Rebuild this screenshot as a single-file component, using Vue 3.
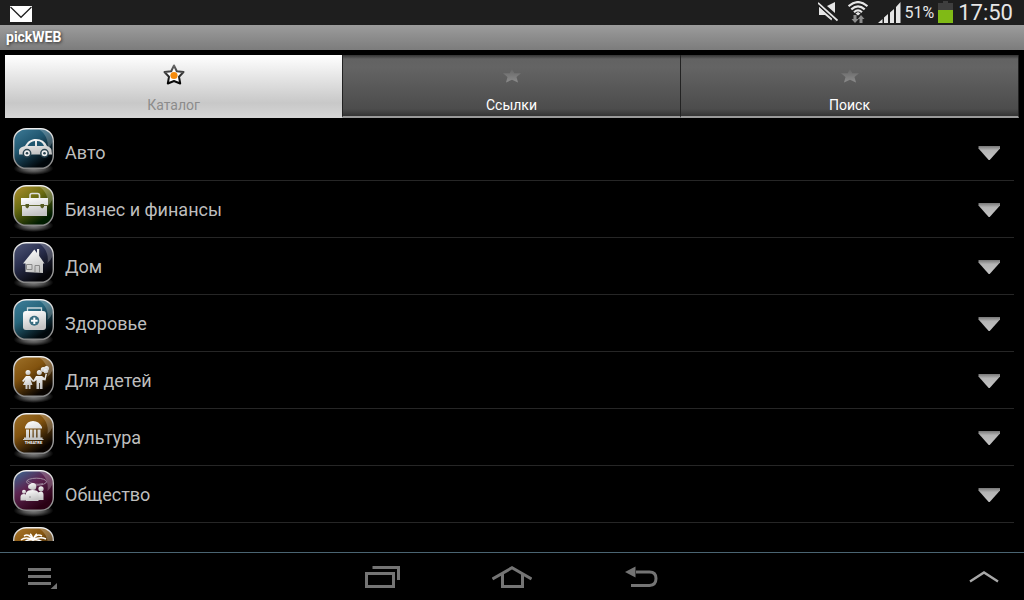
<template>
  <div class="screen">
    <header class="status-bar">
      <svg class="mail" width="22" height="16" viewBox="0 0 22 16">
        <rect width="22" height="16" fill="#fff" />
        <path d="M0.5 1 11 11.3 21.5 1" fill="none" stroke="#1e1e1e" stroke-width="1.2" />
      </svg>
      <div class="status-right">
        <svg class="mute" width="20" height="20" viewBox="0 0 20 20">
          <path d="M1 5 13.500 17V18.500L7 13H1ZM9 4 17 0V11Z" fill="#e6e6e6" />
          <path d="M0 0.8 19.5 18.5" stroke="#1e1e1e" stroke-width="4.5" />
          <path d="M0 0.8 19.5 18.5" stroke="#e6e6e6" stroke-width="1.7" />
          <path d="M1 5V13H8L14 18V16.500L9.500 12.500Z" fill="#e6e6e6" />
        </svg>
        <svg class="wifi" width="20" height="22" viewBox="0 0 20 22">
          <g fill="none" stroke="#e6e6e6" stroke-width="2.200">
            <path d="M0.500 5.200Q10-3 19.500 5.200" />
            <path d="M3.300 8.400Q10 2.500 16.700 8.400" />
            <path d="M6 11.200Q10 7.600 14 11.200" />
          </g>
          <path d="M7.500 12.500 10 11l2.500 1.500L10 14.500Z" fill="#e6e6e6" />
          <path d="M5.500 14h3v4H10.700L7 22 3.500 18h2ZM11.500 22h3v-4h2L13 14 9.800 18H11.500Z" fill="#8c8c8c" />
        </svg>
        <svg class="signal" width="23" height="21" viewBox="0 0 23 21">
          <path d="M0 21 4.500 17v4ZM6 21v-5.500L10 12v9ZM12 21V10.500L16 7v14ZM18 21V5L22.500 0v21Z" fill="#e6e6e6" />
        </svg>
        <span class="percent">51%</span>
        <svg class="battery" width="15" height="22" viewBox="0 0 15 22">
          <path d="M5 0h5v2h5v7H0V2h5Z" fill="#3e3e3e" />
          <rect y="9" width="15" height="13" fill="#80ba16" />
        </svg>
        <time class="clock">17:50</time>
      </div>
    </header>

    <h1 class="title">pickWEB</h1>

    <div class="tabs" role="tablist">
      <button
        v-for="tab in tabs"
        :key="tab"
        type="button"
        role="tab"
        class="tab"
        :class="{ active: tab === activeTab }"
        :aria-selected="tab === activeTab"
        @click="activeTab = tab"
      >
        <svg v-if="tab === activeTab" width="24" height="24" viewBox="0 0 24 24">
          <defs>
            <linearGradient id="starLine" x2="0" y2="1">
              <stop offset="0" stop-color="#666" />
              <stop offset="1" stop-color="#000" />
            </linearGradient>
          </defs>
          <path d="M12 2.500 14.800 8.300 21.500 9 17 13.800 18.200 20.500 12 18 5.800 20.500 7 13.800 2.500 9 9.200 8.300Z" fill="#fff" stroke="url(#starLine)" stroke-width="2" stroke-linejoin="round" />
          <circle cx="12" cy="12.500" r="3.600" fill="#f58a0b" />
        </svg>
        <svg v-else width="24" height="24" viewBox="0 0 24 24">
          <defs>
            <linearGradient id="starFill" x2="0" y2="1">
              <stop offset="0" stop-color="#666" />
              <stop offset="1" stop-color="#8c8c8c" />
            </linearGradient>
          </defs>
          <path d="M12 6 14.300 10.300 21 10.300 16.500 14 18 19.500 12 16.800 6 19.500 7.500 14 3 10.300 9.700 10.300Z" fill="url(#starFill)" />
        </svg>
        <span>{{ tab }}</span>
      </button>
    </div>

    <ul class="list">
      <li v-for="item in items" :key="item.icon">
        <button type="button" class="row">
          <svg class="icon" width="50" height="56" viewBox="0 0 50 56">
            <defs>
              <linearGradient :id="'bg-' + item.icon" x1="0.1" y1="0" x2="0.75" y2="1">
                <stop offset="0" :stop-color="item.from" />
                <stop offset="0.4" :stop-color="item.mid" />
                <stop offset="0.9" :stop-color="item.to" />
              </linearGradient>
              <linearGradient :id="'fg-' + item.icon" x2="0.3" y2="1">
                <stop offset="0" stop-color="#fff" />
                <stop offset="1" stop-color="#c4c4c4" />
              </linearGradient>
              <linearGradient :id="'rim-' + item.icon" x2="0" y2="1">
                <stop offset="0" stop-color="#eee" />
                <stop offset="0.5" stop-color="#aaa" />
                <stop offset="1" stop-color="#888" />
              </linearGradient>
              <radialGradient :id="'glow-' + item.icon">
                <stop offset="0" stop-color="#888" />
                <stop offset="0.5" stop-color="#888" stop-opacity="0.600" />
                <stop offset="1" stop-color="#888" stop-opacity="0" />
              </radialGradient>
            </defs>
            <ellipse cx="23.500" cy="44.500" rx="20" ry="6.500" :fill="`url(#glow-${item.icon})`" />
            <rect x="3.700" y="4.700" width="39.600" height="39.600" rx="12.500" :fill="`url(#bg-${item.icon})`" :stroke="`url(#rim-${item.icon})`" stroke-width="1.400" />
            <path d="M16 5.400H31C38 5.400 42.600 10 42.600 17V18Q41 22 37.500 25C39 16 35 9 29 5.400Z" fill="#fff" opacity="0.220" />

            <g v-if="item.icon === 'auto'">
              <path d="M9 30.500V26Q10 23 15 22C18 17 21 15 26 15Q34 15 37 22Q41 23.500 41.500 26L42 30.500Z" :fill="`url(#fg-${item.icon})`" />
              <path d="M17.500 22Q20 17.500 25 17V22ZM27 17Q32 17 34 22H27Z" :fill="item.mid" />
              <g fill="#eee" stroke="#29434f" stroke-width="1.500">
                <circle cx="17" cy="29.300" r="3.700" />
                <circle cx="34.500" cy="29.300" r="3.700" />
              </g>
              <circle cx="17" cy="29.300" r="1.300" fill="#29434f" />
              <circle cx="34.500" cy="29.300" r="1.300" fill="#29434f" />
            </g>

            <g v-else-if="item.icon === 'business'">
              <path d="M20 17V14.500Q20 12.500 22 12.500H27.500Q29.500 12.500 29.500 14.500V17" fill="none" stroke="#ddd" stroke-width="1.600" />
              <path d="M11 17H38V25H11ZM12 24H37V35H12Z" :fill="`url(#fg-${item.icon})`" />
              <path d="M11 24.500H38" stroke="#555b20" stroke-width="0.900" />
              <path d="M15.500 23H19V26L17.200 27.500 15.500 26ZM30.500 23H34V26L32.200 27.500 30.500 26Z" fill="#555b20" />
            </g>

            <g v-else-if="item.icon === 'home'">
              <path d="M24.300 11.500 27 15V11H29.300V18L34.500 25.500H33V35L15.500 34V25.500H13Z" :fill="`url(#fg-${item.icon})`" />
              <path d="M16.500 26.500H22V31.500H16.500ZM25 34V27.500H29.500V35" fill="none" stroke="#888" stroke-width="1" />
              <path d="M29.800 18V11.500" stroke="#334" stroke-width="0.800" />
            </g>

            <g v-else-if="item.icon === 'health'">
              <path d="M17.500 17V13H31.500V17" fill="none" stroke="#ccd8dc" stroke-width="1.300" />
              <rect x="13" y="16" width="23" height="19" rx="3" :fill="`url(#fg-${item.icon})`" />
              <circle cx="24.300" cy="25.700" r="5" fill="#396d80" />
              <path d="M24.300 22.500V29M21 25.700H27.600" stroke="#fff" stroke-width="2" />
            </g>

            <g v-else-if="item.icon === 'kids'" :fill="`url(#fg-${item.icon})`">
              <circle cx="18" cy="20.500" r="2.500" />
              <path d="M16 24H20L24 29 23 30 20.500 27.500 22.500 33H20.500V37H18.700V33H17.500V37H15.500V33H13L15.500 27.500 13.500 30 12 29Z" />
              <circle cx="29.300" cy="20.500" r="2.500" />
              <path d="M26 24H32L34.500 26 35.500 22H37L35.500 28.500 32.500 28V37H29.800V31H29V37H26.500V28L24 30 23 29Z" />
              <circle cx="33.300" cy="17.500" r="2.500" />
              <circle cx="36.500" cy="16.500" r="2.500" />
              <circle cx="35.800" cy="19.200" r="2.300" />
            </g>

            <g v-else-if="item.icon === 'culture'">
              <path d="M15 18Q17 12 23 12Q29 12 32 18V19.500H15ZM16 20.500H19V28.500H16ZM20 20.500H22.500V28.500H20ZM23.700 20.500H26.200V28.500H23.700ZM27.500 20.500H30.500V28.500H27.500ZM14 28.500H32.500V30H33.500V31H13V30H14Z" :fill="`url(#fg-${item.icon})`" />
              <text x="23.500" y="35" text-anchor="middle" class="theatre">THEATRE</text>
            </g>

            <g v-else-if="item.icon === 'society'">
              <ellipse cx="26.500" cy="15.700" rx="10" ry="3.500" fill="none" stroke="#a897a8" stroke-width="0.900" />
              <path d="M17 14.500Q24 20 33 17.500" fill="none" stroke="#a897a8" stroke-width="0.700" />
              <g :fill="`url(#fg-${item.icon})`">
                <circle cx="20.300" cy="20.800" r="2.300" />
                <circle cx="31" cy="22.800" r="2.600" />
                <circle cx="14" cy="25.800" r="2" />
                <path d="M10.500 34.500V31Q10.500 28 14 28Q17 28 17 31V34.500ZM27 34V28Q28 25.500 31 25.500Q33.500 25.500 33.500 29V34Z" />
                <circle cx="22.800" cy="20.500" r="3.500" />
                <path d="M16 35V27Q17 24 22.500 24Q28 24 28.500 27V35Z" />
              </g>
              <circle cx="20" cy="31" r="0.700" fill="#777" />
            </g>

            <g v-else fill="none" stroke="#fff" stroke-width="1.500">
              <path d="M23 17Q19 10 14 13M23 17Q16 13 11 17M23 17Q16 16 14 20M23 17Q26 10 32 13M23 17Q30 13 36 16M23 17Q30 16 33 20M23 17Q22 12 20 11M23 17Q25 12 27 11M23 17V30" />
            </g>
          </svg>
          <span class="name">{{ item.name }}</span>
          <svg class="arrow" width="22" height="15" viewBox="0 0 22 15">
            <defs>
              <linearGradient id="arrowFill" x2="0" y2="1">
                <stop offset="0" stop-color="#777" />
                <stop offset="0.300" stop-color="#b4b4b4" />
                <stop offset="1" stop-color="#c4c4c4" />
              </linearGradient>
            </defs>
            <path d="M0.500 0H22V2.500L11.700 14H10.700L0.500 2.500Z" fill="url(#arrowFill)" />
          </svg>
        </button>
      </li>
    </ul>

    <nav class="nav-bar">
      <button type="button" class="nav-button" aria-label="Меню">
        <svg width="30" height="24" viewBox="0 0 30 24">
          <path d="M0 3H23V6H0ZM0 10H23V13H0ZM0 17H23V20H0ZM29 18V25H21.500Z" fill="#747474" />
        </svg>
      </button>
      <div class="nav-center">
        <button type="button" class="nav-button" aria-label="Недавние">
          <svg width="40" height="24" viewBox="0 0 40 24" fill="none" stroke="#747474" stroke-width="3">
            <path d="M3.500 8.500H30.500V21.500H3.500ZM9.500 2.500H35.500V15" />
          </svg>
        </button>
        <button type="button" class="nav-button" aria-label="Домой">
          <svg width="40" height="24" viewBox="0 0 40 24" fill="none" stroke="#747474" stroke-width="3">
            <path d="M0.500 14 20 2.800 39.500 14M10.500 9V21.500H30.500V9" />
          </svg>
        </button>
        <button type="button" class="nav-button" aria-label="Назад">
          <svg width="40" height="24" viewBox="0 0 40 24">
            <path d="M15 7H28.500Q35 7 35 13.500T28.500 20.500H10" fill="none" stroke="#747474" stroke-width="3" />
            <path d="M4 7 14.500 1.500V12.500Z" fill="#747474" />
          </svg>
        </button>
      </div>
      <button type="button" class="nav-button" aria-label="Развернуть">
        <svg width="30" height="24" viewBox="0 0 30 24">
          <path d="M1 16.500 15 7.500 29 16.500" fill="none" stroke="#a8a8a8" stroke-width="2.400" />
        </svg>
      </button>
    </nav>
  </div>
</template>

<script setup>
import { ref } from 'vue';

const tabs = ['Каталог', 'Ссылки', 'Поиск'];
const activeTab = ref('Каталог');

const items = [
  { name: 'Авто', icon: 'auto', from: '#3b7894', mid: '#20566f', to: '#00060a' },
  { name: 'Бизнес и финансы', icon: 'business', from: '#aa8d2c', mid: '#6c6d12', to: '#001c00' },
  { name: 'Дом', icon: 'home', from: '#4d5474', mid: '#2b3050', to: '#040408' },
  { name: 'Здоровье', icon: 'health', from: '#3d7d98', mid: '#27667c', to: '#00080c' },
  { name: 'Для детей', icon: 'kids', from: '#9b6e27', mid: '#82530f', to: '#080300' },
  { name: 'Культура', icon: 'culture', from: '#9b6e27', mid: '#82530f', to: '#080300' },
  { name: 'Общество', icon: 'society', from: '#3c6690', mid: '#5c2450', to: '#2a0014' },
  { name: '', icon: 'rest', from: '#a8752a', mid: '#82530f', to: '#080300' }
];
</script>

<style>
body {
  margin: 0;
  background: #000;
}
</style>

<style scoped>
.screen {
  display: flex;
  flex-direction: column;
  height: 100vh;
  overflow: hidden;
  background: #000;
  font-family: Roboto, "Noto Sans", sans-serif;
}

button {
  margin: 0;
  padding: 0;
  border: none;
  background: none;
  font: inherit;
  cursor: pointer;
}

svg {
  display: block;
  flex: none;
}

.status-bar {
  display: flex;
  justify-content: space-between;
  flex: none;
  height: 25px;
  padding: 0 11px 0 10px;
  background: #1e1e1e;
  color: #e6e6e6;
}

.mail {
  margin-top: 6px;
}

.status-right {
  display: flex;
  align-items: flex-start;
}

.mute {
  margin: 2px 10px 0 0;
}

.wifi {
  margin: 1px 10px 0 0;
}

.signal {
  margin: 2px 4px 0 0;
}

.percent {
  margin-right: 4px;
  font-size: 16px;
  line-height: 26px;
}

.battery {
  margin: 1px 5px 0 0;
}

.clock {
  font-size: 22px;
  line-height: 26px;
}

.title {
  flex: none;
  margin: 0;
  padding: 0 6px;
  background: linear-gradient(#9c9c9c, #7c7c7c);
  color: #fff;
  font-size: 14px;
  font-weight: bold;
  line-height: 25px;
  text-shadow: 1px 1px 3px #333;
}

.tabs {
  display: flex;
  flex: none;
  padding: 5px 5px 6px;
}

.tab {
  display: flex;
  flex: 1;
  flex-direction: column;
  align-items: center;
  gap: 10px;
  height: 63px;
  padding-top: 8px;
  border-right: 1px solid #222;
  border-bottom: 2px solid #999;
  background: linear-gradient(#333, #626262 4px, #646464 12px, #4c4c4c 54px, #333);
  background-clip: padding-box;
  color: #fff;
  font-size: 14px;
  line-height: 16px;
}

.tab.active {
  border-bottom-color: #d6d6d6;
  background: linear-gradient(#fff, #c8c8c8 48px, #d4d4d4);
  color: #8c8c8c;
}

.list {
  flex: 1;
  min-height: 0;
  margin: 0 10px 11px;
  padding: 0;
  overflow: hidden;
  list-style: none;
}

.row {
  display: flex;
  align-items: center;
  width: 100%;
  height: 57px;
  padding-right: 14px;
  border-bottom: 1px solid #262626;
  color: #bebebe;
  text-align: left;
}

.name,
.arrow {
  margin-top: 2px;
}

.name {
  flex: 1;
  padding-left: 5px;
  font-size: 18px;
  line-height: 24px;
}

.theatre {
  fill: #fff;
  font-size: 4px;
  font-weight: bold;
}

.nav-bar {
  display: flex;
  align-items: center;
  justify-content: space-between;
  flex: none;
  height: 47px;
  padding: 0 25px 0 28px;
  border-top: 1px solid #4a6472;
}

.nav-center {
  display: flex;
  gap: 89px;
  margin-right: 4px;
}
</style>
